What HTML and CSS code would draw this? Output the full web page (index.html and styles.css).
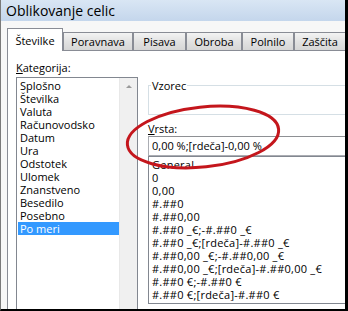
FILE: index.html
```html
<!DOCTYPE html>
<html lang="sl">
<head>
  <meta charset="UTF-8" />
  <title>Oblikovanje celic</title>
  <link rel="stylesheet" href="styles.css">
</head>
<body>
  <div class="frame">
    <div class="titlebar">Oblikovanje celic</div>

    <div class="tabs">
      <div class="tab active">Številke</div>
      <div class="tab w70">Poravnava</div>
      <div class="tab w53">Pisava</div>
      <div class="tab w56">Obroba</div>
      <div class="tab w52">Polnilo</div>
      <div class="tab w52">Zaščita</div>
    </div>

    <div class="panel">
      <div class="left">
        <div class="label"><u>K</u>ategorija:</div>
        <div class="listbox">
          <ul class="items">
            <li>Splošno</li>
            <li>Številka</li>
            <li>Valuta</li>
            <li>Računovodsko</li>
            <li>Datum</li>
            <li>Ura</li>
            <li>Odstotek</li>
            <li>Ulomek</li>
            <li>Znanstveno</li>
            <li>Besedilo</li>
            <li>Posebno</li>
            <li class="selected">Po meri</li>
          </ul>
          <div class="scrollbar"><span class="arrow"></span></div>
        </div>
      </div>

      <div class="right">
        <div class="groupbox">
          <span class="legend">Vzorec</span>
        </div>
        <div class="label vrsta"><u>V</u>rsta:</div>
        <div class="input">0,00 %;[rdeča]-0,00 %</div>
        <ul class="formats">
          <li>General</li>
          <li>0</li>
          <li>0,00</li>
          <li>#.##0</li>
          <li>#.##0,00</li>
          <li>#.##0 _€;-#.##0 _€</li>
          <li>#.##0 _€;[rdeča]-#.##0 _€</li>
          <li>#.##0,00 _€;-#.##0,00 _€</li>
          <li>#.##0,00 _€;[rdeča]-#.##0,00 _€</li>
          <li>#.##0 €;-#.##0 €</li>
          <li>#.##0 €;[rdeča]-#.##0 €</li>
        </ul>
      </div>
    </div>
  </div>

  <svg class="circle" width="348" height="311" viewBox="0 0 348 311">
    <ellipse cx="203" cy="137" rx="76" ry="30" transform="rotate(-6 203 137)"
             fill="none" stroke="#c4161c" stroke-width="3" />
  </svg>
</body>
</html>
```

FILE: styles.css
```css
body {
  margin: 0;
  width: 348px;
  height: 311px;
  overflow: hidden;
  position: relative;
  font-family: "Open Sans", "Noto Sans", sans-serif;
  font-size: 11px;
  color: #000;
}
.frame {
  box-sizing: border-box;
  height: 311px;
  border-left: 1px solid #7a7a7a;
  border-right: 3px solid #000;
  border-bottom: 2px solid #000;
  background: #f7f7f7;
  overflow: hidden;
}
.titlebar {
  height: 21px;
  line-height: 22px;
  padding-left: 5px;
  font-size: 14px;
  background: linear-gradient(#d9e6f4, #c4d6ec);
}
.tabs {
  display: flex;
  align-items: flex-end;
  height: 29px;
  padding-left: 6px;
  box-sizing: border-box;
  position: relative;
  z-index: 1;
}
.tab {
  box-sizing: border-box;
  flex: none;
  height: 18px;
  line-height: 17px;
  text-align: center;
  border: 1px solid #898c95;
  border-bottom: none;
  background: linear-gradient(#f3f3f3, #e2e2e2 50%, #d6d6d6);
  white-space: nowrap;
}
.w70 { width: 70px; }
.w53 { width: 53px; }
.w56 { width: 56px; }
.w52 { width: 52px; }
.tab.active {
  height: 23px;
  line-height: 24px;
  width: 56px;
  margin-bottom: -1px;
  background: #fff;
}
.panel {
  display: flex;
  gap: 10px;
  margin-left: 6px;
  width: 400px;
  height: 300px;
  box-sizing: border-box;
  border: 1px solid #898c95;
  background: #fff;
  padding: 10px 0 0 8px;
}
.label {
  height: 13px;
  line-height: 13px;
}
.left {
  width: 122px;
  flex: none;
}
.listbox {
  display: flex;
  margin-top: 3px;
  height: 300px;
  border: 1px solid #828790;
}
.items {
  list-style: none;
  margin: 0;
  padding: 1px 0 0 1px;
  flex: 1;
}
.items li,
.formats li {
  height: 13px;
  line-height: 13px;
  padding-left: 2px;
  white-space: nowrap;
}
.formats li {
  letter-spacing: 0.25px;
}
.items li.selected {
  background: #3399ff;
  color: #fff;
}
.scrollbar {
  width: 17px;
  background: #f0f0f0;
  border-left: 1px solid #e8e8e8;
  display: flex;
  justify-content: center;
}
.arrow {
  margin-top: 7px;
  width: 0;
  height: 0;
  border-left: 3px solid transparent;
  border-right: 3px solid transparent;
  border-bottom: 3px solid #9a9a9a;
}
.right {
  flex: none;
  width: 240px;
  padding-top: 24px;
}
.groupbox {
  position: relative;
  height: 28px;
  border: 1px solid #d5dfe5;
  border-right: none;
}
.legend {
  position: absolute;
  left: 2px;
  top: -7px;
  padding: 0 1px;
  line-height: 13px;
  background: #fff;
}
.vrsta {
  margin-top: 7px;
}
.input {
  box-sizing: border-box;
  height: 20px;
  line-height: 18px;
  margin-top: 1px;
  padding-left: 3px;
  border: 1px solid #abadb3;
  border-top-color: #8e9094;
}
.formats {
  list-style: none;
  margin: 0;
  padding: 1px 0 0 1px;
  height: 148px;
  box-sizing: border-box;
  border: 1px solid #828790;
}
.circle {
  position: absolute;
  left: 0;
  top: 0;
  pointer-events: none;
}
```
